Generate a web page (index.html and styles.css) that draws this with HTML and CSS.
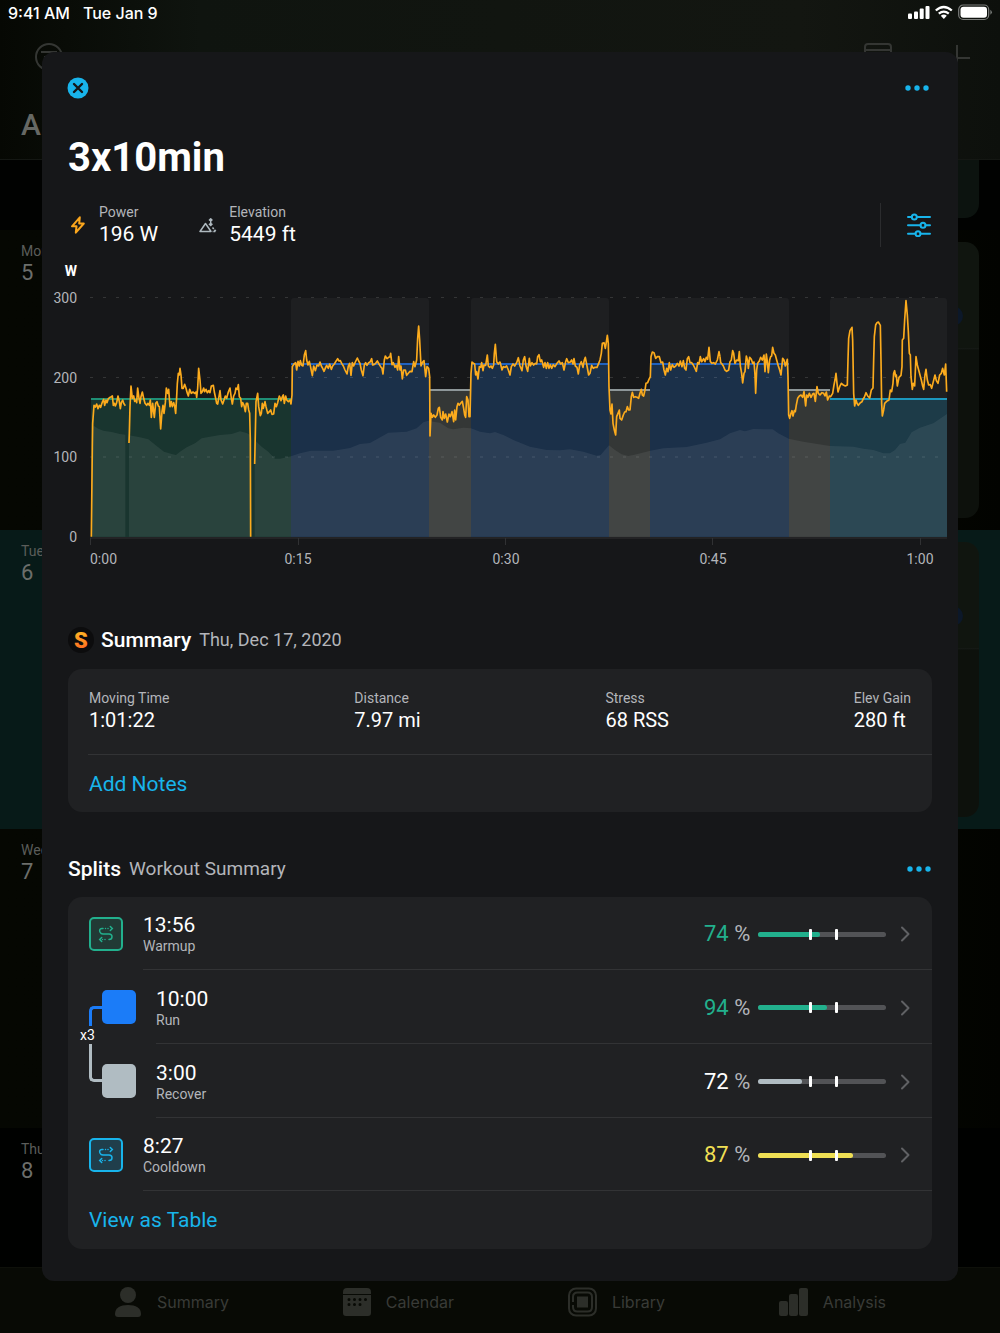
FILE: index.html
```html
<!DOCTYPE html>
<html lang="en">
<head>
<meta charset="utf-8">
<meta name="viewport" content="width=device-width, initial-scale=1">
<title>3x10min</title>
<link rel="stylesheet" href="styles.css">
</head>
<body>
<div class="backdrop">
  <header class="backdrop-head">
    <div class="backdrop-tools">
      <svg class="tool-filter" width="30" height="30" viewBox="0 0 30 30"><circle cx="15" cy="15" r="13"/><path d="M7 10h16M10 15h10M13 20h4"/></svg>
      <svg class="tool-day" width="28" height="28" viewBox="0 0 28 28"><rect x="1" y="1" width="26" height="26" rx="3"/><path d="M1 7h26"/></svg>
      <svg class="tool-add" width="28" height="28" viewBox="0 0 28 28"><path d="M14 2v24M1 15h26"/></svg>
    </div>
    <p class="backdrop-title">A</p>
  </header>
  <div class="days">
    <div class="day day-first"><div class="day-card"></div></div>
    <div class="day day-tall"><p class="day-label">Mon<span>5</span></p><div class="day-card"><i class="day-dot"></i></div></div>
    <div class="day day-today"><p class="day-label">Tue<span>6</span></p><div class="day-card"><i class="day-dot"></i></div></div>
    <div class="day"><p class="day-label">Wed<span>7</span></p></div>
    <div class="day day-last"><p class="day-label">Thu<span>8</span></p></div>
  </div>
  <nav class="tabs" aria-label="Main">
    <a href="#summary"><svg width="28" height="32" viewBox="0 0 28 32"><circle cx="14" cy="9" r="8"/><path d="M1 28c0-6 5-9 13-9s13 3 13 9c0 2-1 3-3 3H4c-2 0-3-1-3-3z"/></svg>Summary</a>
    <a href="#calendar"><svg width="28" height="30" viewBox="0 0 28 30"><path d="M4 1h20a4 4 0 0 1 4 4v2H0V5a4 4 0 0 1 4-4zM0 8h28v18a3 3 0 0 1-3 3H3a3 3 0 0 1-3-3z"/><path class="tab-dots" d="M6 12.500h0M11.500 12.500h0M17 12.500h0M22.500 12.500h0M6 17.500h0M11.500 17.500h0M17 17.500h0"/></svg>Calendar</a>
    <a href="#library"><svg width="29" height="30" viewBox="0 0 29 30"><g class="tab-rings"><rect x="1" y="1.500" width="27" height="27" rx="7"/><path d="M5 15V10q0-4.500 4.500-4.500h10q4.500 0 4.500 4.500v10q0 4.500-4.500 4.500h-10Q5 24.500 5 20v-2"/></g><path d="M9 9.500h11v11H9z"/></svg>Library</a>
    <a href="#analysis"><svg width="29" height="30" viewBox="0 0 29 30"><rect x="0" y="14" width="9" height="15" rx="2"/><rect x="10" y="7" width="9" height="22" rx="2"/><rect x="20" y="1" width="9" height="28" rx="2"/></svg>Analysis</a>
  </nav>
</div>

<div class="statusbar">
  <span>9:41 AM</span><span>Tue Jan 9</span>
  <svg class="status-icons" width="86" height="18" viewBox="0 0 86 18" aria-label="Signal, Wi-Fi and battery">
    <g fill="#fff"><rect x="1" y="9.500" width="4" height="5.500" rx="1"/><rect x="7" y="7.500" width="4" height="7.500" rx="1"/><rect x="12.700" y="4.500" width="4" height="10.500" rx="1"/><rect x="18.500" y="2" width="4" height="13" rx="1"/></g>
    <g fill="none" stroke="#fff" stroke-width="2.300"><path d="M28.800 6.500q8-7 16 0"/><path d="M31.800 9.700q5-4.200 10 0"/></g>
    <path fill="#fff" d="M33.800 11.700q3-2.300 6 0l-3 3.400z"/>
    <rect x="51.700" y="1" width="30" height="14.500" rx="4.500" fill="none" stroke="#7c7e7c" stroke-width="1.200"/>
    <rect x="53.500" y="2.800" width="26.500" height="11" rx="3" fill="#fff"/><path d="M83.400 5.800q3 2.500 0 5z" fill="#7c7e7c"/>
  </svg>
</div>

<main class="sheet">
  <div class="sheet-bar">
    <button class="icon-button" aria-label="Close"><svg width="22" height="22" viewBox="0 0 22 22"><circle cx="11" cy="11" r="10.500" fill="#18b4eb"/><path d="M7 7l8 8M15 7l-8 8" stroke="#151618" stroke-width="2.400" stroke-linecap="round"/></svg></button>
    <button class="icon-button more" aria-label="More options"><svg width="24" height="6" viewBox="0 0 24 6"><circle cx="3" cy="3" r="2.700"/><circle cx="12" cy="3" r="2.700"/><circle cx="21" cy="3" r="2.700"/></svg></button>
  </div>
  <h1>3x10min</h1>
  <div class="metrics">
    <svg class="bolt" width="20" height="20" viewBox="0 0 20 20"><path d="M11.800 2.300L4 11.300h4.500L7.800 17.700 15.800 8.500h-4.600z"/></svg>
    <dl class="metric"><dt>Power</dt><dd>196 W</dd></dl>
    <svg class="peak" width="20" height="20" viewBox="0 0 20 20"><path d="M2 16.500L7.500 8.500l5.500 8z"/><path d="M12.700 4v6M11 5.500L12.700 3.800l1.700 1.700M11 8.700l1.700 1.700 1.700-1.700"/><path d="M14.500 12.500l3.500 4h-4" stroke-dasharray="2 1"/></svg>
    <dl class="metric"><dt>Elevation</dt><dd>5449 ft</dd></dl>
    <button class="icon-button tune" aria-label="Chart settings"><svg width="24" height="24" viewBox="0 0 24 24"><path d="M1 4h4M10 4h13M1 12.300h12.500M18.500 12.300H23M1 20.700h7.500M13.500 20.700H23"/><circle cx="7.300" cy="4" r="2.500"/><circle cx="16" cy="12.300" r="2.500"/><circle cx="11" cy="20.700" r="2.500"/></svg></button>
  </div>

  <svg class="chart" viewBox="0 0 916 320" role="img" aria-label="Power and elevation over time">
    <g class="blocks" transform="translate(-42 -262)">
      <path class="target" d="M291 537V301q0-3 3-3h132q3 0 3 3v236zM471 537V301q0-3 3-3h132q3 0 3 3v236zM650 537V301q0-3 3-3h133q3 0 3 3v236zM830 537V301q0-3 3-3h111q3 0 3 3v236z"/>
      <path class="warm" d="M91 399h200v138H91z"/><path class="run" d="M291 364h138v173H291zM471 364h138v173H471zM650 364h139v173H650z"/>
      <path class="rest" d="M429 390h42v147h-42zM609 390h41v147h-41zM789 390h41v147h-41z"/><path class="cool" d="M830 399h117v138H830z"/>
      <path class="warm-line" d="M91 399h200"/><path class="run-line" d="M291 364h138M471 364h138M650 364h139"/>
      <path class="rest-line" d="M429 390h42M609 390h41M789 390h41"/><path class="cool-line" d="M830 399h117"/>
      <path class="grid" d="M90 297.500h857M90 377.500h857M90 457h857"/>
      <path class="axis" d="M90 538h857M90.500 538v7M298.500 538v7M505.500 538v7M712.500 538v7M920.500 538v7"/>
    </g>
    <!-- Traces use a grid of three units to the pixel -->
    <g transform="translate(-2 -2) scale(.33333)">
      <path class="elevation" d="M154 830L158 500 162 498 175 506 190 512 215 516 240 522 256 524V830zM267 830V526L300 532 325 538 350 558 372 575 395 582 408 585 420 575 440 562 465 550 485 535 510 530 540 525 575 522 600 514 620 519 631 525V830zM644 830V540L665 560 685 575 705 596 720 596 753 589 780 580 813 572 880 572 930 564 960 552 990 549 1045 518 1100 515 1130 505 1150 487 1165 482 1180 485 1200 488 1225 505 1240 508 1270 503 1293 505 1320 515 1350 520 1365 516 1390 525 1420 540 1470 560 1520 570 1560 571 1590 568 1630 575 1670 587 1682 585 1707 556 1725 570 1745 583 1765 588 1790 583 1831 572 1870 565 1940 561 2000 548 2040 538 2070 520 2100 510 2115 514 2140 507 2198 508 2215 520 2246 536 2290 545 2370 558 2440 560 2470 566 2500 570 2530 580 2550 580 2565 570 2580 552 2596 548 2615 517 2640 503 2680 490 2721 462V830z"/>
      <g class="power">
        <path d="M154 830L157 560 158 490 162 436 166 441 170 432 174 446 178 436 182 442 185 432 188 424 191 418 194 436 198 420 201 428 205 416 210 412 214 410 217 408 220 436 223 430 226 438 230 428 234 408 238 425 241 446 244 428 248 420 251 430 256 437M267 549L268 520 270 440 273 378 277 415 281 408 284 424 288 420 290 428 293 384 297 415 300 430 303 410 307 396 311 415 315 430 320 436 324 430 328 436 331 420 334 472 338 430 343 472 347 430 351 425 355 438 358 440 362 507 366 455 369 436 372 460 376 428 379 384 383 400 386 388 390 440 394 425 397 440 401 428 404 438 407 460 410 410 412 370 415 340 418 345 420 325 423 345 426 385 430 385 434 373 438 385 442 400 445 408 449 388 454 400 459 396 464 400 468 396 470 412 473 385 476 325 480 360 483 400 487 395 491 384 494 395 498 388 502 398 506 392 510 398 514 378 520 376 523 396 527 415 530 430 533 432 536 415 540 392 543 420 548 432 552 420 556 408 560 415 565 396 570 384 574 415 577 432 581 408 585 400 588 384 592 388 595 374 598 410 602 415 605 440 608 428 612 436 616 455 619 430 623 430 626 450 629 460 631 540 632 830M644 612L646 520 648 425 653 400 656 440 661 467 664 460 667 430 670 445 675 425 678 440 683 460 688 455 692 450 696 463 701 462 705 430 709 440 713 428 718 408 720 412"/>
        <path transform="translate(720)" d="M0 412L3 422 7 410 10 405 13 430 17 408 20 420 25 425 30 420 33 432 36 405 37 320 42 312 47 308 50 330 54 304 58 318 61 302 65 316 69 318 73 285 77 272 80 300 84 315 88 304 92 322 97 347 101 318 106 332 111 315 116 318 120 306 124 318 128 325 132 334 137 322 140 316 145 325 149 312 154 328 158 318 163 312 169 302 173 296 177 303 181 302 185 310 190 318 195 330 201 342 205 318 209 310 213 346 217 308 221 318 226 306 232 294 236 303 240 310 244 330 249 347 253 315 257 308 261 316 266 308 271 305 275 296 278 315 282 314 287 310 292 303 297 312 302 320 306 325 309 342 313 300 316 288 321 296 326 292 330 290 332 280 336 314 340 308 345 322 349 316 353 330 356 290 360 330 363 318 367 357 371 330 376 330 380 346 385 340 390 334 396 335 401 305 405 320 410 300 413 235 416 198 419 240 423 318 428 306 432 302 437 350 441 320 446 325 449 350 450 528 453 460 457 472 461 465 466 472 471 465 475 445 478 442 482 472 487 480 489 455 493 475 497 462 502 486 507 462 511 470 516 455 521 485 524 450 527 480 531 440 534 430 538 435 542 430 547 424 551 445 554 465 557 472 560 410 564 420 567 470 570 470 573 340 576 306 580 310 584 312 587 345 590 335 594 357 598 320 602 322 605 308 609 332 612 315 617 316 622 285 625 318 629 322 633 318 637 325 641 315 643 280 646 253 650 305 655 312 660 305"/>
        <path transform="translate(1380)" d="M0 305L6 330 10 320 15 322 20 318 25 330 30 345 34 320 39 312 44 318 50 308 55 293 60 318 66 332 70 300 74 290 78 318 83 334 88 295 91 318 96 308 101 315 106 310 110 312 113 290 117 284 121 305 125 300 131 322 135 308 139 325 143 308 147 325 151 314 155 325 160 314 165 320 171 310 177 303 182 312 187 308 192 330 197 305 200 296 205 308 211 306 215 300 219 312 222 296 226 318 231 322 235 342 239 315 244 305 249 322 253 300 256 292 261 318 266 345 270 340 275 316 280 325 285 322 291 322 296 310 300 300 304 280 307 250 312 248 316 265 320 240 322 226 325 250 327 380 330 450 333 462 336 432 339 490 343 510 347 525 350 470 354 460 358 450 360 475 365 480 370 465 374 456 378 455 382 440 386 450 390 450 394 410 397 397 401 412 406 410 411 412 416 415 420 400 424 388 427 405 431 408 435 390 438 370 443 368 447 358 451 350 453 290 457 276 462 278 467 295 472 290 478 290 483 308 488 306 492 330 496 345 500 325 504 335 508 308 512 330 517 314 522 322 527 318 532 310 537 318 541 303 546 320 550 302 554 325 558 330 562 296 566 290 570 308 575 308 580 315 585 325 589 334 593 308 597 312 601 290 605 305 611 296 615 305 619 292 623 298 627 262 631 305 636 310 641 308 646 312 652 300 657 275 660 290"/>
        <path transform="translate(2040)" d="M0 290L2 308 6 312 10 318 15 330 20 334 26 330 30 305 34 300 38 272 41 280 45 310 50 300 55 302 58 275 61 318 65 340 68 369 72 340 75 335 79 288 83 302 85 325 89 292 94 298 98 310 102 306 105 345 107 400 110 330 113 310 118 303 122 292 127 300 132 285 135 335 139 282 142 305 145 338 149 300 152 290 155 288 158 262 162 280 166 285 170 300 175 318 179 330 183 345 188 295 192 300 196 318 198 312 202 298 204 350 206 465 209 475 213 460 216 452 219 468 223 452 226 455 229 435 233 415 238 408 243 405 248 412 252 395 257 438 260 405 264 412 268 400 273 412 278 402 282 400 286 424 291 380 295 400 300 405 306 398 311 400 315 408 319 396 323 420 328 408 332 410 338 400 342 375 345 360 348 340 351 370 354 396 359 380 364 370 370 375 376 378 382 375 384 300 386 235 390 212 396 202 398 240 401 400 404 438 408 420 411 430 415 436 421 428 426 425 429 418 433 412 438 398 443 408 449 414 454 390 459 384 461 300 463 230 467 195 471 188 475 186 481 196 483 300 485 430 487 468 491 450 494 430 500 424 507 420 511 390 515 395 519 370 521 340 524 332 527 350 529 345 532 378 537 352 543 346 546 320 547 240 551 235 554 180 558 122 562 165 565 215 568 280 571 285 573 350 577 388 580 370 584 378 588 290 592 315 596 330 600 345 604 360 608 378 611 388 615 345 618 328 622 360 626 375 631 374 635 385 640 365 645 345 649 362 654 370 659 345 664 340 668 325 673 345 677 312 680 395"/>
      </g>
    </g>
    <g class="y-labels"><text class="unit" x="35" y="14">W</text><text x="35" y="41">300</text><text x="35" y="121">200</text><text x="35" y="200">100</text><text x="35" y="280">0</text></g>
    <g class="x-labels"><text class="x-first" x="48" y="302">0:00</text><text x="256" y="302">0:15</text><text x="464" y="302">0:30</text><text x="671" y="302">0:45</text><text x="878" y="302">1:00</text></g>
  </svg>

  <section>
    <div class="section-head dated">
      <svg class="logo" width="26" height="26" viewBox="0 0 26 26" aria-hidden="true"><defs><linearGradient id="flame" x1="0" y1="0" x2="0" y2="1"><stop offset="0" stop-color="#ffc526"/><stop offset="1" stop-color="#ff5a1f"/></linearGradient></defs><circle cx="13" cy="13" r="13" fill="#0c0c0d"/><text x="13" y="21" fill="url(#flame)">S</text></svg>
      <h2>Summary</h2><span>Thu, Dec 17, 2020</span>
    </div>
    <div class="card">
      <dl class="stats">
        <div><dt>Moving Time</dt><dd>1:01:22</dd></div>
        <div><dt>Distance</dt><dd>7.97 mi</dd></div>
        <div><dt>Stress</dt><dd>68 RSS</dd></div>
        <div><dt>Elev Gain</dt><dd>280 ft</dd></div>
      </dl>
      <button class="card-action notes">Add Notes</button>
    </div>
  </section>

  <section class="splits">
    <div class="section-head">
      <h2>Splits</h2><span>Workout Summary</span>
      <button class="icon-button more" aria-label="Split options"><svg width="24" height="6" viewBox="0 0 24 6"><circle cx="3" cy="3" r="2.700"/><circle cx="12" cy="3" r="2.700"/><circle cx="21" cy="3" r="2.700"/></svg></button>
    </div>
    <div class="card">
      <a class="split" href="#warmup">
        <span class="badge badge-warm"><svg width="16" height="18" viewBox="0 0 16 18"><path d="M3 8.500C1 7 1 3.500 4 3.500h1M3 8.300q.5.700 2 .7h6c4 0 4 5.500 0 5.500"/><path d="M7.500 3.500h4M4.500 14.500h4" stroke-dasharray="0 2.500"/><path d="M12.300 1.500l2 2-2 2M3.700 12.500l-2 2 2 2"/></svg></span>
        <span class="split-body">
          <span class="split-name"><b>13:56</b><small>Warmup</small></span>
          <span class="effort effort-green"><span><em>74</em> %</span><span class="track"><i style="width:48%"></i></span></span>
          <svg class="chevron" width="10" height="16" viewBox="0 0 10 16"><path d="M2 1.500L8.500 8 2 14.500"/></svg>
        </span>
      </a>
      <div class="repeat">
        <a class="split" href="#run">
          <span class="badge badge-run"></span>
          <span class="split-body">
            <span class="split-name"><b>10:00</b><small>Run</small></span>
            <span class="effort effort-green"><span><em>94</em> %</span><span class="track"><i style="width:54%"></i></span></span>
            <svg class="chevron" width="10" height="16" viewBox="0 0 10 16"><path d="M2 1.500L8.500 8 2 14.500"/></svg>
          </span>
        </a>
        <a class="split" href="#recover">
          <span class="badge badge-rest"></span>
          <span class="split-body">
            <span class="split-name"><b>3:00</b><small>Recover</small></span>
            <span class="effort effort-gray"><span><em>72</em> %</span><span class="track"><i style="width:34%"></i></span></span>
            <svg class="chevron" width="10" height="16" viewBox="0 0 10 16"><path d="M2 1.500L8.500 8 2 14.500"/></svg>
          </span>
        </a>
        <div class="bracket"><i class="bracket-top"></i><span>x3</span><i class="bracket-bottom"></i></div>
      </div>
      <a class="split" href="#cooldown">
        <span class="badge badge-cool"><svg width="16" height="18" viewBox="0 0 16 18"><path d="M3 8.500C1 7 1 3.500 4 3.500h1M3 8.300q.5.700 2 .7h6c4 0 4 5.500 0 5.500"/><path d="M7.500 3.500h4M4.500 14.500h4" stroke-dasharray="0 2.500"/><path d="M12.300 1.500l2 2-2 2M3.700 12.500l-2 2 2 2"/></svg></span>
        <span class="split-body">
          <span class="split-name"><b>8:27</b><small>Cooldown</small></span>
          <span class="effort effort-yellow"><span><em>87</em> %</span><span class="track"><i style="width:74%"></i></span></span>
          <svg class="chevron" width="10" height="16" viewBox="0 0 10 16"><path d="M2 1.500L8.500 8 2 14.500"/></svg>
        </span>
      </a>
      <button class="card-action">View as Table</button>
    </div>
  </section>
</main>
</body>
</html>
```
FILE: styles.css
```css
* { box-sizing: border-box; margin: 0; }
body {
  position: relative;
  padding-bottom: 52px;
  background: #000;
  color: #fff;
  font: 14px/18px Roboto, "Liberation Sans", sans-serif;
}
svg { display: block; flex: none; }
button { padding: 0; border: 0; background: none; color: inherit; font: inherit; cursor: pointer; }
a { color: inherit; text-decoration: none; }

/* Dimmed calendar behind the sheet */
.backdrop { position: absolute; inset: 0; display: flex; flex-direction: column; overflow: hidden; }
.backdrop-head {
  flex: none;
  height: 160px;
  padding: 42px 29px 0 34px;
  border-bottom: 1px solid #141713;
  background: linear-gradient(90deg, #060803, #0f140f 20%, #131611 80%, #0d100c);
}
.backdrop-tools { display: flex; align-items: center; fill: none; stroke: #343633; stroke-width: 2; }
.tool-day { margin-left: auto; }
.tool-add { margin-left: 51px; }
.backdrop-title { margin: 37px 0 0 -13px; color: #666864; font-size: 30px; line-height: 32px; font-weight: 500; }
.days { flex: 1; display: flex; flex-direction: column; min-height: 0; }
.day { flex: none; display: flex; justify-content: space-between; height: 299px; padding: 12px 21px; background: linear-gradient(90deg, #050702, #040600 90%, #020300); }
.day-first { justify-content: flex-end; height: 70px; padding-top: 0; background: #010201; }
.day-tall { height: 300px; }
.day-today { background: #071a18; }
.day-last { flex: 1; background: #000100; }
.day-label { color: #5b5d5a; }
.day-label span { display: block; font-size: 22px; line-height: 26px; color: #6c6e6b; }
.day-card { width: 120px; border-radius: 14px; background: linear-gradient(#10150f 106px, #171b17 106px, #0d110c 108px); }
.day-first .day-card { border-radius: 0 0 14px 14px; background: #0c130f; }
.day-dot { display: block; width: 20px; height: 20px; margin: 64px 0 0 84px; border-radius: 50%; background: #0c1829; }
.tabs {
  flex: none;
  display: flex;
  justify-content: space-evenly;
  height: 66px;
  padding-top: 17px;
  border-top: 1px solid #0e100a;
  background: #080a05;
  color: #393b37;
  font: 16px/34px Inter, sans-serif;
}
.tabs a { display: flex; align-items: center; gap: 15px; height: 34px; }
.tabs svg { fill: #2c2e29; }
.tab-dots { stroke: #080a05; stroke-width: 3; stroke-linecap: round; }
.tab-rings { fill: none; stroke: #2c2e29; stroke-width: 2; }

.statusbar { position: relative; display: flex; align-items: center; gap: 13px; height: 26px; padding: 0 7px 0 8px; font: 500 16px/18px Inter, sans-serif; }
.status-icons { margin-left: auto; }

/* Workout sheet */
.sheet { position: relative; margin: 26px 42px 0; padding: 24px 0 32px; border-radius: 12px; background: #161719; }
.sheet-bar { display: flex; justify-content: space-between; align-items: center; height: 24px; padding: 0 29px 0 25px; }
.icon-button { display: flex; align-items: center; }
.more { height: 24px; color: #18b4eb; fill: currentColor; }
h1 { margin: 34px 26px 0; font-size: 40px; line-height: 48px; font-weight: 700; }
.metrics { display: flex; align-items: center; height: 46px; margin: 20px 26px 0; }
.bolt { fill: none; stroke: #fba61c; stroke-width: 2; stroke-linejoin: round; }
.peak { margin: 0 11px 0 40px; fill: none; stroke: #aeb9bf; stroke-width: 1.5; stroke-linejoin: round; }
.bolt + .metric { margin-left: 11px; }
dt { color: #b3b5ba; }
dd { font-size: 20px; line-height: 26px; }
.metric dd { font-size: 21px; }
.tune { height: 44px; margin-left: auto; padding: 0 1px 0 26px; border-left: 1px solid #2b2c2e; fill: none; stroke: #18b4eb; stroke-width: 2; stroke-linecap: round; }

.chart { width: 100%; height: auto; margin-top: 14px; }
.target { fill: #1e1f21; }
.warm { fill: #19352f; }
.run { fill: #1b3049; }
.rest { fill: #343736; }
.cool { fill: #1d3b48; }
.blocks { stroke-width: 2; fill: none; }
.warm-line { stroke: #1f8f75; }
.run-line { stroke: #2062c0; }
.rest-line { stroke: #8e9799; }
.cool-line { stroke: #1c97bd; }
.grid { stroke: #fff; stroke-opacity: .13; stroke-width: 1; stroke-dasharray: 3 10; }
.axis { stroke: #303133; stroke-width: 1; }
.elevation { fill: #fff; fill-opacity: .07; }
.power { fill: none; stroke: #fcab1d; stroke-width: 5; stroke-linejoin: round; }
.y-labels, .x-labels { fill: #b3b5ba; font-size: 14px; }
.y-labels { text-anchor: end; }
.x-labels { text-anchor: middle; }
.x-labels .x-first { text-anchor: start; }
.y-labels .unit { fill: #fff; font-size: 14px; font-weight: 700; }

.section-head { display: flex; align-items: center; height: 26px; margin: 45px 27px 16px 26px; font-size: 19px; line-height: 26px; color: #b3b5ba; }
.section-head h2 { margin-right: 8px; color: #fff; font-size: 21px; line-height: 26px; font-weight: 500; }
.section-head .more { margin-left: auto; }
.dated { font-size: 18px; }
.logo { margin-right: 7px; font-size: 22px; font-weight: 900; text-anchor: middle; }
.card { margin: 0 26px; border-radius: 14px; background: #202123; overflow: hidden; }
.stats { display: flex; justify-content: space-between; height: 86px; margin-left: 20px; padding: 20px 21px 0 1px; border-bottom: 1px solid #323335; }
.card-action { display: block; width: 100%; height: 58px; padding-left: 21px; color: #18b4eb; font-size: 21px; text-align: left; }
.notes { height: 57px; }

.splits .section-head { margin-top: 44px; margin-bottom: 15px; }
.split { display: flex; align-items: center; height: 73px; padding-left: 21px; }
.badge { flex: none; display: grid; place-items: center; width: 34px; height: 34px; border-radius: 5px; }
.badge svg { fill: none; stroke: currentColor; stroke-width: 1.5; stroke-linecap: round; }
.badge-warm { border: 2px solid; background: #213a35; color: #22b08d; }
.badge-cool { border: 2px solid; background: #203e4b; color: #18b4eb; }
.badge-run { background: #1b7cf8; }
.badge-rest { background: #b0bcc2; }
.split-body { flex: 1; display: flex; align-items: center; height: 100%; margin-left: 20px; padding: 2px 22px 0 0; border-bottom: 1px solid #323335; }
.split-name { flex: 1; }
.split-name b { display: block; font-size: 21px; line-height: 24px; font-weight: 400; }
.split-name small { display: block; font-size: 14px; line-height: 18px; color: #b3b5ba; }
.effort { display: flex; align-items: center; gap: 8px; width: 182px; font-size: 22px; color: #b3b5ba; }
.effort em { font-style: normal; color: var(--tone); }
.effort-green { --tone: #22b08d; }
.effort-yellow { --tone: #efdf54; }
.effort-gray { --tone: #b0bcc2; }
.effort-gray em { color: #fff; }
.track { position: relative; flex: 1; height: 5px; border-radius: 3px; background: #525356; }
.track i { display: block; height: 5px; border-radius: 3px; background: var(--tone); }
.track::before, .track::after { content: ""; position: absolute; top: -3px; left: 40%; width: 3px; height: 11px; border-radius: 1px; background: #fff; }
.track::after { left: 60%; }
.chevron { margin-left: 14px; fill: none; stroke: #606164; stroke-width: 2; stroke-linecap: round; stroke-linejoin: round; }
.repeat { position: relative; }
.repeat .split { height: 74px; padding-left: 34px; }
.bracket { position: absolute; top: 36px; left: 12px; width: 22px; height: 76px; }
.bracket i { display: block; margin-left: 9px; border-left: 3px solid; }
.bracket span { display: block; line-height: 18px; }
.bracket-top { height: 20px; border-top: 3px solid; border-radius: 5px 0 0 0; color: #1b7cf8; }
.bracket-bottom { height: 38px; border-bottom: 3px solid; border-radius: 0 0 0 5px; color: #b0bcc2; }
```
